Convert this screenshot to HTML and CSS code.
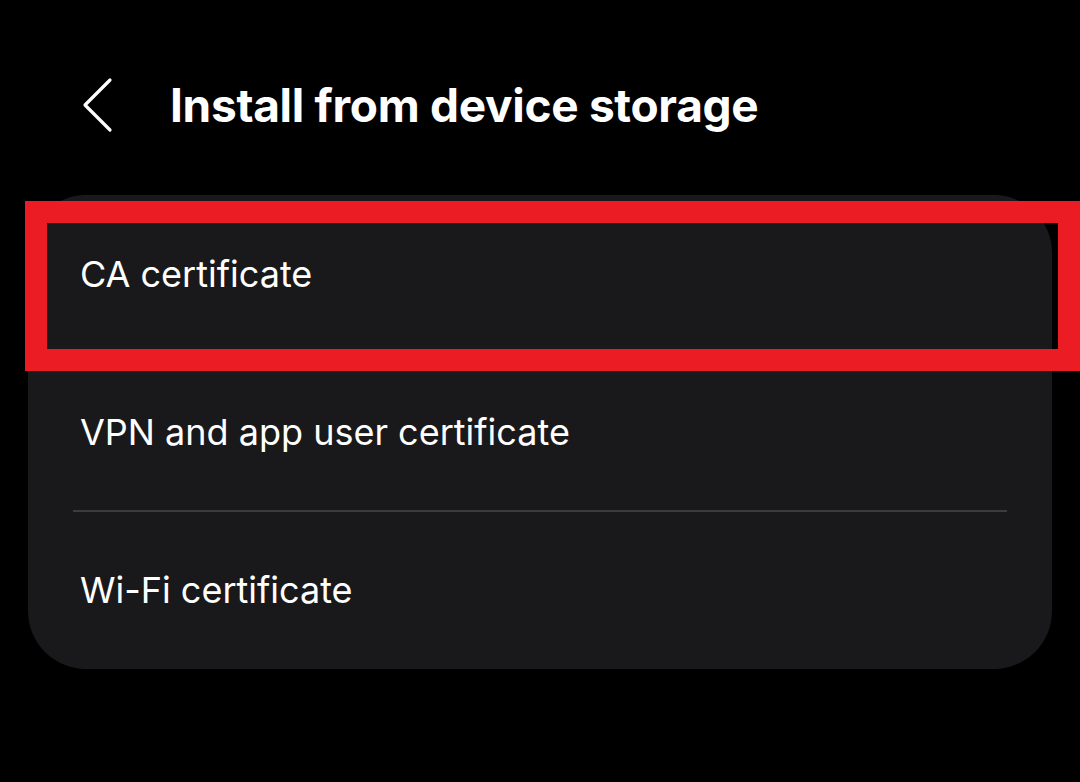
FILE: index.html
```html
<!DOCTYPE html>
<html lang="en">
<head>
    <meta charset="UTF-8">
    <meta name="viewport" content="width=device-width, initial-scale=1.0">
    <title>Install from device storage</title>
    <link rel="stylesheet" href="styles.css">
</head>
<body>

    <!-- Header -->
    <div class="header">
        <button class="back-btn" aria-label="Back">
            <svg width="32" height="56" viewBox="0 0 32 56">
                <polyline points="28,3 3,28 28,53" fill="none" stroke="#fff" stroke-width="3.2" stroke-linecap="round" stroke-linejoin="round"/>
            </svg>
        </button>
        <h1 class="title">Install from device storage</h1>
    </div>

    <!-- Options -->
    <div class="card">
        <div class="item">CA certificate</div>
        <div class="item">VPN and app user certificate</div>
        <div class="divider"></div>
        <div class="item">Wi-Fi certificate</div>

        <!-- Highlight -->
        <div class="highlight"></div>
    </div>

</body>
</html>
```

FILE: styles.css
```css
/* General Styles */
body {
    margin: 0;
    background: #000;
    color: #fff;
    font-family: 'Inter', 'Roboto', sans-serif;
    width: 1080px;
    height: 782px;
    overflow: hidden;
}

/* Header */
.header {
    display: flex;
    align-items: center;
    height: 195px;
    padding-left: 82px;
    padding-top: 14px;
    box-sizing: border-box;
}

.back-btn {
    background: none;
    border: none;
    padding: 0;
    width: 34px;
    height: 56px;
    margin-right: 54px;
    cursor: pointer;
    display: flex;
}

.title {
    margin: 0;
    font-size: 46px;
    font-weight: 700;
    letter-spacing: -0.3px;
}

/* Card */
.card {
    position: relative;
    margin-left: 28px;
    width: 1024px;
    background: #19191b;
    border-radius: 58px;
}

.item {
    height: 158px;
    display: flex;
    align-items: center;
    padding-left: 52px;
    font-size: 36px;
    font-weight: 400;
}

.divider {
    height: 2px;
    margin: -1px 45px -1px 45px;
    background: #3c3c3e;
}

/* Red highlight frame */
.highlight {
    position: absolute;
    left: -3px;
    top: 6px;
    width: 1055px;
    height: 170px;
    border: 22px solid #ec1c24;
    box-sizing: border-box;
}
```
